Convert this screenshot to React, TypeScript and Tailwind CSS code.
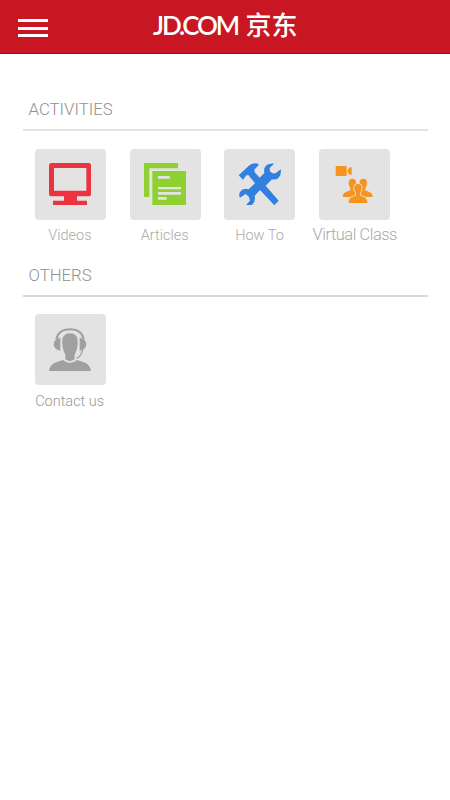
import type { ReactNode } from 'react';

interface TileProps {
    label: string;
    viewBox: string;
    labelClass?: string;
    children: ReactNode;
}

function Tile({ label, viewBox, labelClass = 'pt-px pr-px text-[14.5px] text-[#aaaaaa]', children }: TileProps) {
    return (
        <button className="flex w-[94.8px] flex-col items-center">
            <span className="block h-[71px] w-[71px] overflow-hidden rounded-[4px] bg-[#e3e3e3]">
                <svg className="block h-full w-full" viewBox={viewBox}>
                    {children}
                </svg>
            </span>
            <span className={`mt-[5px] h-5 whitespace-nowrap font-light leading-5 ${labelClass}`}>{label}</span>
        </button>
    );
}

function SectionTitle({ children }: { children: ReactNode }) {
    return (
        <h2 className="pl-[5.5px] text-[16.8px] font-light leading-5 text-[#909090]">
            {children}
        </h2>
    );
}

export default function App() {
    return (
        <div className="min-h-[800px] w-full bg-white font-['Roboto',sans-serif]">
            {/* Header */}
            <header className="flex h-[54px] items-start border-b border-[#c00008] bg-[#c81722] pl-[18px]">
                <button className="mt-[19px] flex w-[30px] flex-col gap-[4.5px]">
                    <span className="h-[3px] bg-white" />
                    <span className="h-[3px] bg-white" />
                    <span className="h-[3px] bg-white" />
                </button>
                <div className="ml-[105px] mt-[10px] flex h-[30px] items-center leading-[30px] text-white">
                    <span className="w-[92.5px] font-['Lato',sans-serif] text-[26px] font-semibold tracking-[-2.2px]">JD.COM</span>
                    <span className="-mt-[2px] font-['Noto_Sans_CJK_SC',sans-serif] text-[26px] font-medium">京东</span>
                </div>
            </header>

            <main className="pl-[23px] pr-[22px] pt-[45px]">
                {/* Activities */}
                <SectionTitle>ACTIVITIES</SectionTitle>
                <div className="mt-[10px] h-[2px] bg-[#e3e3e3]" />
                <div className="mt-[18px] flex">
                    <Tile label="Videos" viewBox="15 15 213 213">
                        <path
                            fill="#eb343f"
                            fillRule="evenodd"
                            d="M65 57H175Q183 57 183 65V149Q183 157 175 157H141V170H171V183H69V170H102V157H65Q57 157 57 149V65Q57 57 65 57ZM72 72V140H169V72Z"
                        />
                    </Tile>
                    <Tile label="Articles" viewBox="15 15 213 213">
                        <path fill="#8fd131" d="M57 57H159V73H73V159H57Z" />
                        <path fill="#8fd131" d="M82 81H183V183H82Z" />
                        <path fill="#e3e3e3" d="M99 96H134V104H99ZM99 129H168V136H99ZM99 144H168V152H99ZM99 159H125V167H99Z" />
                    </Tile>
                    <Tile label="How To" viewBox="13 15 213 213">
                        <path
                            fill="#317fdf"
                            d="M57 94L90 63Q101 56 115 59L117 63L104 77L105 85L120 101L134 87Q131 73 140 64Q149 58 163 59L150 72L151 82L158 88H168L183 76Q186 91 177 101Q169 109 157 106L138 125L177 170L164 184L121 138L105 155Q109 172 97 183H79L91 170L88 159L78 150L61 161Q55 150 64 140Q73 131 87 136L106 118L86 93L80 94L70 107Z"
                        />
                    </Tile>
                    <Tile
                        label="Virtual Class"
                        viewBox="43 15 213 213"
                        labelClass="text-[16.4px] tracking-[-0.45px] text-[#a8a8a8]"
                    >
                        <g fill="#f7941e">
                            <rect x="93" y="66" width="33" height="30" rx="2" />
                            <path d="M129 77L136 70H141V92H136L129 85Z" />
                            <path d="M143 104C151 104 155 110 154 118Q154 126 149 131V139L161 144Q171 148 171 159H114Q114 148 124 144L137 139V131Q132 126 132 118C131 110 135 104 143 104Z" />
                            <path d="M176 104C184 104 188 110 187 118Q187 126 182 131V139L194 144Q204 148 204 159H147Q147 148 157 144L170 139V131Q165 126 165 118C164 110 168 104 176 104Z" />
                            <path
                                stroke="#e3e3e3"
                                strokeWidth="5"
                                paintOrder="stroke"
                                d="M160 120C168 120 172 126 171 134Q171 142 166 147V154L178 159Q188 163 188 177H132Q132 163 142 159L154 154V147Q149 142 149 134C148 126 152 120 160 120Z"
                            />
                        </g>
                    </Tile>
                </div>

                {/* Others */}
                <div className="pt-[20px]">
                    <SectionTitle>OTHERS</SectionTitle>
                </div>
                <div className="mt-[10px] h-[1.5px] bg-[#d8d8d8]" />
                <div className="mt-[17.5px] flex">
                    <Tile label="Contact us" viewBox="15 12 213 213" labelClass="pt-[1.5px] pr-[1.5px] text-[14.5px] text-[#9a9a9a]">
                        <g fill="#a0a0a0">
                            <path d="M120 70C136 70 145 80 143 100C142 117 139 125 134 133V148Q120 159 106 148V133C101 125 98 117 97 100C95 80 104 70 120 70Z" />
                            <path d="M57 183Q60 163 78 157L99 150Q120 168 141 150L162 157Q180 163 183 183Z" />
                            <path d="M91 83V122Q73 121 71 103Q72 87 91 83ZM149 83V122Q167 121 169 103Q168 87 149 83Z" />
                        </g>
                        <path fill="none" stroke="#a0a0a0" strokeWidth="6" d="M79 88C83 68 98 58 120 58S157 68 161 88" />
                        <path fill="none" stroke="#a0a0a0" strokeWidth="4" d="M158 118Q155 138 140 145" />
                    </Tile>
                </div>
            </main>
        </div>
    );
}
